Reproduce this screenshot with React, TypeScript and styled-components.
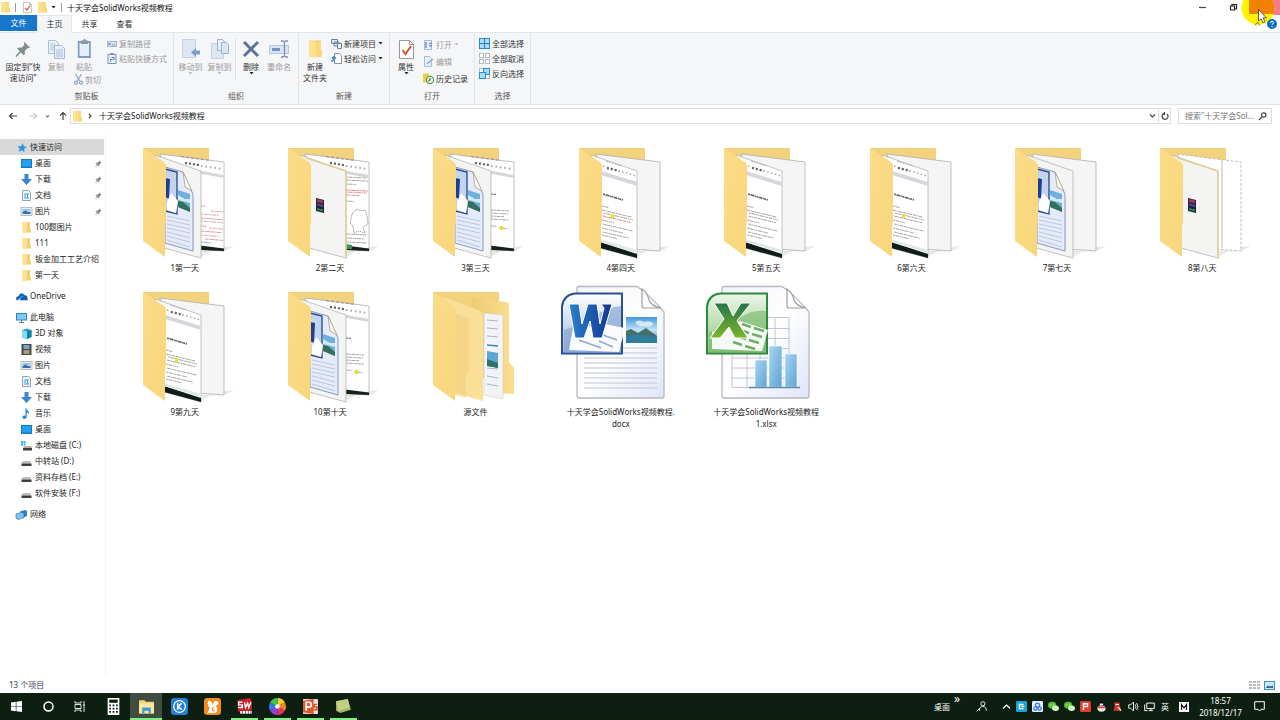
import React from "react";
import styled, { createGlobalStyle } from "styled-components";

const Global = createGlobalStyle`
  * { box-sizing: border-box; }
  html, body { margin: 0; padding: 0; }
  body, button, input {
    font-family: "Noto Sans", "Noto Sans CJK SC", sans-serif;
    font-size: 8px;
    line-height: 12px;
    color: #222;
  }
  button { background: none; border: 0; padding: 0; margin: 0; }
  a { color: inherit; text-decoration: none; }
  ul { list-style: none; margin: 0; padding: 0; }
  svg { display: block; flex: none; overflow: visible; }
`;

const Window = styled.div`
  min-height: 100vh;
  display: flex;
  flex-direction: column;
  background: #fff;
`;

/* ---------- title bar ---------- */

const TitleBar = styled.header`
  height: 15px;
  display: flex;
  align-items: center;
  padding-left: 1px;
`;
const QuickButton = styled.button<{ $w?: number }>`
  width: ${(p) => p.$w ?? 10}px;
  height: 15px;
  display: flex;
  align-items: center;
  justify-content: center;
`;
const Bar = styled.span`
  width: 1px;
  height: 9px;
  margin: 0 5px;
  background: #9a9a9a;
`;
const Title = styled.h1`
  margin: 0;
  flex: 1;
  font-size: 8px;
  font-weight: 400;
  color: #111;
`;
const WindowButton = styled.button`
  width: 31px;
  height: 15px;
  display: flex;
  align-items: center;
  justify-content: center;
`;
const CloseButton = styled(WindowButton)`
  position: relative;
  background: #f47c8c;
`;
const Pointer = styled.svg`
  position: absolute;
  top: 0;
  right: 5px;
  z-index: 2;
  pointer-events: none;
`;

/* ---------- tabs ---------- */

const Tabs = styled.nav`
  height: 18px;
  display: flex;
  border-bottom: 1px solid #e4e5e6;
`;
const Tab = styled.button<{ $kind?: "file" | "active" }>`
  width: ${(p) => (p.$kind === "file" ? 37 : 35)}px;
  height: ${(p) => (p.$kind === "file" ? 16 : 18)}px;
  padding-bottom: ${(p) => (p.$kind === "file" ? 0 : 1)}px;
  color: ${(p) => (p.$kind === "file" ? "#fff" : "#333")};
  background: ${(p) => (p.$kind === "file" ? "#1877c9" : p.$kind === "active" ? "#f5f6f8" : "none")};
  border: solid ${(p) => (p.$kind === "active" ? "#e4e5e6" : "transparent")};
  border-width: ${(p) => (p.$kind === "file" ? "0" : "1px 1px 0")};
`;
const TabEnd = styled.div`
  margin-left: auto;
  display: flex;
  align-items: center;
  gap: 6px;
  padding: 0 3px;
  position: relative;
  z-index: 3;
`;

/* ---------- ribbon ---------- */

const Ribbon = styled.section`
  display: flex;
  height: 72px;
  background: #f5f6f8;
  border-bottom: 1px solid #e2e3e4;
`;
const Group = styled.div<{ $w: number }>`
  width: ${(p) => p.$w}px;
  display: flex;
  flex-direction: column;
  border-right: 1px solid #e2e4e6;
`;
const GroupBody = styled.div<{ $pad?: number }>`
  flex: 1;
  display: flex;
  align-items: flex-start;
  padding: 3px 0 0 ${(p) => p.$pad ?? 2}px;
`;
const Caption = styled.div`
  height: 14px;
  line-height: 12px;
  text-align: center;
  color: #555;
`;
const Big = styled.button<{ $w: number; $off?: boolean }>`
  width: ${(p) => p.$w}px;
  display: flex;
  flex-direction: column;
  align-items: center;
  padding-top: 1px;
  line-height: 11px;
  color: ${(p) => (p.$off ? "#9a9a9a" : "#333")};
  white-space: pre-line;
`;
const BigIcon = styled.span`
  height: 24px;
  display: flex;
  align-items: center;
`;
const Stack = styled.div<{ $pad?: number }>`
  display: flex;
  flex-direction: column;
  padding-left: ${(p) => p.$pad ?? 0}px;
`;
const Small = styled.button<{ $off?: boolean; $h?: number; $pad?: number }>`
  height: ${(p) => p.$h ?? 15}px;
  display: flex;
  align-items: center;
  gap: 2px;
  padding-left: ${(p) => p.$pad ?? 0}px;
  white-space: nowrap;
  color: ${(p) => (p.$off ? "#9a9a9a" : "#333")};
`;
const VLine = styled.span`
  width: 1px;
  height: 42px;
  margin: 2px 1px 0;
  background: #e0e2e4;
`;

/* ---------- address ---------- */

const AddressRow = styled.div`
  display: flex;
  align-items: center;
  height: 22px;
  padding-right: 8px;
`;
const NavButton = styled.button<{ $w: number }>`
  width: ${(p) => p.$w}px;
  height: 16px;
  display: flex;
  align-items: center;
  justify-content: center;
`;
const AddressBox = styled.div`
  flex: 1;
  height: 16px;
  display: flex;
  align-items: center;
  gap: 6px;
  padding-left: 2px;
  border: 1px solid #dedede;
`;
const AddressEnd = styled.div`
  display: flex;
  align-self: stretch;
  margin-left: auto;
`;
const AddressButton = styled.button`
  width: 12px;
  display: flex;
  align-items: center;
  justify-content: center;
  & + & { border-left: 1px solid #dedede; }
`;
const SearchBox = styled.label`
  width: 94px;
  height: 16px;
  margin-left: 7px;
  display: flex;
  align-items: center;
  padding: 0 4px 0 6px;
  border: 1px solid #dedede;
`;
const SearchInput = styled.input`
  flex: 1;
  min-width: 0;
  padding: 0;
  border: 0;
  outline: 0;
  background: none;
  &::placeholder { color: #777; opacity: 1; }
`;

/* ---------- body ---------- */

const Body = styled.div`
  flex: 1;
  display: flex;
  padding-top: 7px;
`;
const Sidebar = styled.nav`
  width: 106px;
  flex: none;
  padding-top: 5px;
  border-right: 1px solid #f3f3f3;
`;
const TreeGroup = styled.ul`
  margin-bottom: 5px;
`;
const TreeLink = styled.a<{ $root?: boolean; $selected?: boolean }>`
  height: 16px;
  display: flex;
  align-items: center;
  gap: 3px;
  margin-right: 1px;
  padding: 0 2px 0 ${(p) => (p.$root ? 16 : 21)}px;
  white-space: nowrap;
  background: ${(p) => (p.$selected ? "#d9d9d9" : "none")};
`;
const Grow = styled.span`
  flex: 1;
`;
const Files = styled.main`
  flex: 1;
  display: grid;
  grid-template-columns: repeat(auto-fill, minmax(145px, 1fr));
  grid-auto-rows: minmax(144px, auto);
  align-content: start;
  padding: 0 5px 0 6px;
`;
const FileItem = styled.button`
  display: flex;
  flex-direction: column;
  align-items: center;
  justify-content: flex-start;
  height: 144px;
`;
const FileName = styled.span`
  white-space: pre-line;
  text-align: center;
`;

/* ---------- status + taskbar ---------- */

const StatusBar = styled.footer`
  height: 16px;
  display: flex;
  align-items: center;
  gap: 4px;
  padding: 0 5px 0 9px;
  color: #33425c;
`;
const Taskbar = styled.div`
  height: 27px;
  display: flex;
  background: #0d1f10;
  color: #fff;
`;
const TaskButton = styled.button<{ $active?: boolean; $running?: boolean }>`
  width: ${(p) => (p.$running && !p.$active ? 27 : 32)}px;
  margin: 0 ${(p) => (p.$running && !p.$active ? "3px 0 2px" : "0")};
  height: 27px;
  display: flex;
  align-items: center;
  justify-content: center;
  background: ${(p) => (p.$active ? "#3f4d41" : "none")};
  border: solid ${(p) => (p.$running ? "#82ee84" : "transparent")};
  border-width: 0 0 2px;
  padding-top: 2px;
`;
const Apps = styled.div`
  display: flex;
  gap: 1px;
  padding-left: 1px;
`;
const Tray = styled.div`
  margin-left: auto;
  display: flex;
  align-items: center;
  padding-right: 8px;
`;
const TrayButton = styled.button<{ $w?: number }>`
  width: ${(p) => p.$w ?? 16}px;
  height: 27px;
  display: flex;
  align-items: center;
  justify-content: center;
  color: #fff;
`;
const Chevrons = styled(TrayButton)`
  align-items: flex-start;
  font-size: 12px;
`;
const Clock = styled.button`
  width: 53px;
  color: #fff;
  text-align: center;
`;

/* ---------- small icons ---------- */

const FolderIcon = ({ w = 9, h = 11 }: { w?: number; h?: number }) => (
  <svg width={w} height={h} viewBox="0 0 9 11" preserveAspectRatio="none">
    <path d="M0 .3h8v6.200h1V10.300H0z" fill="#f0c85d" />
    <path d="M0 .3h3.500l1.500 1V10.800L0 10.300z" fill="#fde191" />
    <path d="M5 1h3v5.500h1v3.800H5z" fill="#f9d877" />
  </svg>
);
const Caret = ({ c = "#222" }: { c?: string }) => (
  <svg width="5" height="3" viewBox="0 0 5 3"><path d="M.5 0h4L2.500 2.500z" fill={c} /></svg>
);
const CheckDoc = ({ w = 10, h = 12 }: { w?: number; h?: number }) => (
  <svg width={w} height={h} viewBox="0 0 15 19">
    <path d="M.5.5h10l4 4v14H.5z" fill="#fff" stroke="#989898" />
    <path d="M10.500.5v4h4" fill="none" stroke="#989898" />
    <path d="M3.500 10l3 4 5.500-8" fill="none" stroke="#d35227" strokeWidth="2" />
  </svg>
);
const PinBig = () => (
  <svg width="16" height="16" viewBox="0 0 16 16">
    <path d="M9.500 1l5.500 5.500-1.500.8-.8-.2-3 3 .2 3-1.200 1.200L2.200 7.700l1.200-1.200 3.200.2 2.800-2.900-.5-1z" fill="#7f8c92" />
    <path d="M5.500 10.500L1 15.500" stroke="#7f8c92" strokeWidth="1.500" />
  </svg>
);
const PinSmall = () => (
  <svg width="7" height="7" viewBox="0 0 16 16">
    <path d="M9.500 1l5.500 5.500-2 1-3.300 3.200v3L8.500 15 1.500 7.800 3 6.500h3l3-3z" fill="#85898c" />
    <path d="M5.500 10.500L1 15.500" stroke="#85898c" strokeWidth="2" />
  </svg>
);
const CopyBig = () => (
  <svg width="17" height="19" viewBox="0 0 17 19">
    <path d="M.5.5h7l3 3v10H.5z" fill="#e9f0f9" stroke="#aebfd6" />
    <path d="M2 4h5M2 6h5M2 8h5M2 10h4" stroke="#b9c9e0" />
    <path d="M6.500 5.500h7l3 3v10h-10z" fill="#e9f0f9" stroke="#a6b9d3" />
    <path d="M8 10h7M8 12h7M8 14h7M8 16h7" stroke="#a9bedb" />
  </svg>
);
const PasteBig = () => (
  <svg width="15" height="20" viewBox="0 0 15 20">
    <rect x=".8" y="2" width="13" height="17" fill="#7e9cc4" />
    <rect x="2.500" y="4" width="9.600" height="13" fill="#e6eefa" />
    <path d="M4 1.500h2a1.500 1.500 0 013 0h2V5H4z" fill="#8b96a6" />
  </svg>
);
const Scissors = () => (
  <svg width="9" height="11" viewBox="0 0 9 11" fill="none" stroke="#90a5c6" strokeWidth="1.300">
    <path d="M1.500 0l4.300 7M7.500 0L3.200 7" /><circle cx="2" cy="8.700" r="1.500" /><circle cx="7" cy="8.700" r="1.500" />
  </svg>
);
const PathIcon = () => (
  <svg width="10" height="6" viewBox="0 0 10 6">
    <rect x=".5" y=".5" width="9" height="5" fill="#d2dff0" stroke="#a3b7d3" />
    <path d="M1.500 2l1 2 1-2M5 4h1M7 4h1" stroke="#5d7ba8" fill="none" />
  </svg>
);
const ShortcutPaste = () => (
  <svg width="10" height="11" viewBox="0 0 10 11">
    <rect x="1" y="1.500" width="8" height="9" fill="#e9f0fa" stroke="#7b97c0" />
    <rect x="3" y="0" width="4" height="2" fill="#8994a5" />
    <path d="M3.500 8.500V6.500h2M4.500 4.500H7V7" fill="none" stroke="#53709e" />
  </svg>
);
const MoveTo = () => (
  <svg width="18" height="20" viewBox="0 0 18 20">
    <path d="M.5.500h13v18H.5z" fill="#dde7f4" stroke="#c3d1e4" />
    <path d="M9 13.500l5-4.500v2.500h4v4h-4V18z" fill="#809ecb" />
  </svg>
);
const CopyTo = () => (
  <svg width="18" height="20" viewBox="0 0 18 20">
    <path d="M.5 4.500h12v15H.5z" fill="#dde7f4" stroke="#c3d1e4" />
    <path d="M6.500.500h5l2 2v9h-7z" fill="#e9f0f9" stroke="#9db2d0" />
    <path d="M10.500 3.500h5l2 2v9h-7z" fill="#dbe6f5" stroke="#9db2d0" />
  </svg>
);
const DeleteIcon = () => (
  <svg width="18" height="18" viewBox="0 0 18 18"><path d="M2 2l14 14M16 2L2 16" stroke="#5a7292" strokeWidth="3" /></svg>
);
const RenameIcon = () => (
  <svg width="20" height="18" viewBox="0 0 20 18">
    <rect x=".5" y="5.500" width="19" height="8" fill="#d9e5f5" stroke="#b6c8e0" />
    <rect x="3" y="8" width="8" height="3" fill="#7493c2" />
    <path d="M12 1h2l1.500 1L17 1h2M15.500 2v14M12 17h2l1.500-1 1.500 1h2" fill="none" stroke="#7f90a8" strokeWidth="1.300" />
  </svg>
);
const NewItem = () => (
  <svg width="11" height="10" viewBox="0 0 11 10">
    <path d="M.5.500h6v4h-6zM3 3h5v4H3z" fill="#e3edf7" stroke="#67829f" />
    <path d="M6.500 4.500h4v5h-4z" fill="#fff" stroke="#67829f" />
  </svg>
);
const EasyAccess = () => (
  <svg width="11" height="11" viewBox="0 0 11 11">
    <path d="M3.500.5h5l2 2v8h-7z" fill="#fff" stroke="#7e95ac" />
    <path d="M0 8c2 0 3-1 3-3M1 5.500L3 3.500l2 2" fill="none" stroke="#287ec2" strokeWidth="1.200" />
  </svg>
);
const OpenIcon = () => (
  <svg width="11" height="10" viewBox="0 0 11 10">
    <rect x="1.500" y=".5" width="7" height="9" fill="#e7effa" stroke="#a9bddb" />
    <path d="M3 2v6M6 3.500h3M6 6h3" stroke="#7192c5" strokeWidth="1.500" />
  </svg>
);
const EditIcon = () => (
  <svg width="11" height="11" viewBox="0 0 11 11">
    <path d="M1.500.5h5l2 2v8h-7z" fill="#e7effa" stroke="#a9bddb" />
    <path d="M4 8l6-5" stroke="#8ea9d1" strokeWidth="1.500" />
  </svg>
);
const HistoryIcon = () => (
  <svg width="11" height="11" viewBox="0 0 11 11">
    <path d="M0 .5h6v9H0z" fill="#f0cf48" />
    <circle cx="7" cy="7" r="3.700" fill="#e6f4e6" stroke="#39903e" />
    <path d="M7 5v2l-2 1" fill="none" stroke="#276a31" />
  </svg>
);
const Squares = ({ kind }: { kind: "all" | "none" | "invert" }) => {
  const on = { fill: "#a9dcf9", stroke: "#2d8ccb" };
  const off = { fill: "#fff", stroke: "#b4b9bf" };
  const s = (i: number) => (kind === "invert" && (i === 1 || i === 2) ? on : off);
  return (
    <svg width="11" height="11" viewBox="0 0 11 11">
      {kind === "all" ? (
        <>
          <rect x=".5" y=".5" width="10" height="10" {...on} />
          <path d="M5.500 0v11M0 5.500h11" stroke="#2079bd" />
        </>
      ) : (
        [0, 3, 1, 2].map((i) =>
          kind === "invert" && (i === 1 || i === 2) ? (
            <rect key={i} x={i === 1 ? 4.5 : 0.5} y={i === 1 ? 0.5 : 4.5} width="6" height="6" {...s(i)} />
          ) : (
            <rect key={i} x={(i % 2) * 6 + 0.5} y={i > 1 ? 6.5 : 0.5} width="4" height="4" {...s(i)} />
          )
        )
      )}
    </svg>
  );
};
const Arrow = ({ d, c = "#444", w = 10, h = 10 }: { d: string; c?: string; w?: number; h?: number }) => (
  <svg width={w} height={h} viewBox={`0 0 ${w} ${h}`} fill="none" stroke={c} strokeWidth="1.200"><path d={d} /></svg>
);

/* ---------- tree icons ---------- */

const treeIcons: Record<string, React.ReactNode> = {
  star: <path d="M7 1l.7 3.200L11 5 8.200 6.600l.3 3.600-2.500-2-3.300 1.600 1-3.400L1.500 4l3.400.2z" fill="#3093dc" />,
  desktop: <><rect x="0" y="1" width="11" height="9" fill="#1478c8" /><rect x="1" y="2" width="9" height="6.500" fill="#24a0ee" /></>,
  down: <path d="M3.500 0h4v5H11L5.500 11 0 5h3.500z" fill="#3b86d3" />,
  doc: <><path d="M1.500.5h6l2 2v8h-8z" fill="#eef5fb" stroke="#8aa5b8" /><path d="M3 4h5M3 6h2M3 8h5M6.500 4v4" stroke="#4b9cd2" /></>,
  pic: <><rect x="0" y="1.500" width="11" height="8" fill="#e6edf2" stroke="#a4b1bb" strokeWidth=".8" /><path d="M1.500 3h8v2.500h-8z" fill="#98c8ec" /><path d="M1.500 8V6l3-1.500L7 6h2.500v2z" fill="#3d6f9e" /></>,
  folder: <><path d="M1.500.3h7.500v7h1V10.500H1.500z" fill="#f3cf6e" /><path d="M1.500.3l4.500.7v10l-4.500-.5z" fill="#fde39a" /></>,
  cloud: <path d="M1 9.500C-1 8 0 5 2.500 5 3 2 7 1 8.500 4c2.500 0 3.500 1.500 3 3 1 1 .5 2.500-.5 2.500H4C3.500 7 5 5.500 7 5.500" fill="#0f62b5" stroke="#fff" strokeWidth=".4" />,
  pc: <><rect x="0" y="1" width="11" height="7.500" fill="#2a86c8" /><rect x="1" y="2" width="9" height="5.500" fill="#7cc9f4" /><path d="M3 10.500h5M5.500 8v2" stroke="#6d8595" /></>,
  cube: <><path d="M1 2l5-1.500L10.500 2v7L6 11 1 9.500z" fill="#25a5c9" /><path d="M1 2l5 1.500V11L1 9.500z" fill="#7fe0f0" /><path d="M6 3.500L10.500 2v7L6 11z" fill="#1681a8" /></>,
  video: <><rect x=".5" y="0" width="10" height="11" fill="#3e4a56" /><rect x="2.500" y="1" width="6" height="4" fill="#7fa5c4" /><rect x="2.500" y="6" width="6" height="4" fill="#b0976a" /></>,
  music: <path d="M5 0c.5 2.500 4 3 3 6.500C7.700 5 6.500 4.500 5.700 4.500V9C5 11.500 1.500 11.500 1.500 9.300 1.500 7.500 3.500 7 4.500 7.700V0z" fill="#1e8bd6" />,
  sysdisk: <><path d="M0 1h2v2H0zM2.500 1h2v2h-2zM0 3.500h2v2H0zM2.500 3.500h2v2h-2z" fill="#26b3e6" /><path d="M3 6h7l1 2H2z" fill="#b3b3b3" /><rect x="2" y="8" width="9" height="2.500" fill="#3b3f42" /></>,
  disk: <><path d="M2 5h7l1.500 2.500H.5z" fill="#bcbcbc" /><rect x=".5" y="7.500" width="10" height="2.500" fill="#3b3f42" /></>,
  net: <><path d="M4 2.500L9 1l2 1v5L6 9z" fill="#2f7fc2" /><path d="M0 5l5.500-1.500L8 4.500v4L2.500 10.500 0 9z" fill="#7fc1f0" stroke="#2e78b8" strokeWidth=".7" /></>,
};
const TreeIcon = ({ name }: { name: string }) => (
  <svg width="11" height="11" viewBox="0 0 11 11">{treeIcons[name]}</svg>
);

/* ---------- large file icons ---------- */

type Line = [number, number, number, string?];

/* Rows of tiny page text; each entry is x1, x2, y and an optional colour. */
const Scribble = ({ lines, slope }: { lines: Line[]; slope: number }) => (
  <>
    {lines.map(([x1, x2, y, c], i) => (
      <path key={i} d={`M${x1} ${y}L${x2} ${y + (x2 - x1) * slope}`} stroke={c ?? "#999"} strokeWidth=".9"
        strokeDasharray={i % 2 ? "3 .6 1.500 .5 4 .7" : "2 .5 4 .8 1 .4"} />
    ))}
  </>
);

type Front = "word" | "rar" | "doc";
type Back = "red" | "mixed" | "doc" | "blank" | "dashed";

const BackPage = ({ kind }: { kind: Back }) => (
  <>
    <path d="M80 118l24-1 9-5-10 1z" fill="#000" opacity=".09" />
    <path d="M39 20L103 28V117L76 115z" fill={kind === "blank" ? "#f5f5f5" : "#fff"} stroke="#b0b0b0" strokeWidth=".8"
      strokeDasharray={kind === "dashed" ? "3 1.500" : undefined} />
    {kind === "dashed" && <path d="M84 26v88" stroke="#aaa" strokeWidth=".8" />}
    {(kind === "red" || kind === "doc" || kind === "mixed") && (
      <>
        <path d="M60 22.500l30 4" stroke="#999" strokeWidth="1.200" strokeDasharray="3 2" />
        <path d="M64 29l14 2" stroke="#555" strokeWidth="2" strokeDasharray="2 2" />
        <path d="M80 32l22 3" stroke="#a5a5a5" strokeWidth="2" strokeDasharray="1.500 3" />
        <path d="M70 35l33 6v3l-33-6z" fill="#d3d6da" />
        <path d="M79 111.500l24 3v2.500l-24-1z" fill="#14221a" />
      </>
    )}
    {kind === "red" && <Scribble slope={0.08} lines={[[80,84,72],[90,102,77,"#d99"],[80,98,80,"#daa0a0"],[80,102,84,"#d88"],[80,102,87,"#daa0a0"],[80,86,92,"#d88"],[88,102,94,"#d99"],[80,101,97,"#d88"],[80,98,101,"#daa0a0"],[84,102,105,"#d88"],[80,90,108]]} />}
    {kind === "doc" && <Scribble slope={0.06} lines={[[80,85,60,"#444"],[80,98,76],[80,97,79],[80,93,82],[80,98,85],[80,86,92],[88,97,94,"#a98"]]} />}
    {kind === "doc" && <rect x="89" y="92" width="3" height="4" fill="#e8e02a" />}
    {kind === "mixed" && (
      <>
        <Scribble slope={0.05} lines={[[80,101,43],[80,102,46],[80,90,50],[80,102,56,"#d77"],[80,101,58,"#d88"],[80,94,61,"#d88"],[80,88,67],[80,100,100],[80,98,104],[80,101,108]]} />
        <path d="M86 80l5-5 4 2 4-1 2 6 1 8-5 3 2 6-6-2-5 2-1-7-3-3z" fill="none" stroke="#888" strokeWidth=".8" strokeDasharray="1.500 .7" />
        <path d="M80 110l6 1v4h-6z" fill="#3f8d57" />
      </>
    )}
  </>
);

const FrontPage = ({ kind, mark }: { kind: Front; mark?: string }) => (
  <>
    <path d="M80 123l9-5-9-2z" fill="#000" opacity=".08" />
    <path d="M34 21L80 37V124L43 114z" fill={kind === "doc" ? "#fff" : "#f4f4f3"} stroke="#b4b4b4" strokeWidth=".8" />
    {kind === "rar" && (
      <>
        <path d="M40 24l40 13v87" fill="none" stroke="#e2cf93" strokeWidth="1.500" />
        <path d="M50 64l8 2v13l-8-2z" fill="#22243c" />
        <path d="M51 65l6 1.500v3l-6-1.500z" fill="#a83556" />
        <path d="M51 69.500l6 1.500v2l-6-1.500z" fill="#4d4aa8" />
        <path d="M51 74l6 1.500v2l-6-1.500z" fill="#2b8a48" />
      </>
    )}
    {kind === "word" && (
      <>
        <path d="M44 33l18 5 8 18 2 4v57l-28-8z" fill="#e6ebfb" stroke="#6d83a9" strokeWidth=".8" />
        <path d="M62 38l2 15 7 4z" fill="#fbfaf4" stroke="#a69f86" strokeWidth=".8" />
        <path d="M44 35l12 3v42l-12-3z" fill="#c3d4ec" stroke="#26468f" strokeWidth="1.300" />
        <path d="M44 44l5 1-1 20-4-2z" fill="#1c3f95" />
        <path d="M46 68l4-9 7 8-2 12-9-3z" fill="#fff" />
        <path d="M57 56l12 4v18l-12-5z" fill="#6fb0dd" />
        <path d="M57 61l7 4 5 0v4l-12-3z" fill="#d2e9f4" />
        <path d="M57 67l5 1 7 6v4l-12-5z" fill="#33705c" />
        <path d="M46 82l23 5M46 86l23 5M46 90l23 5M46 94l23 5M46 98l23 6M46 102l23 6M46 106l23 7" stroke="#aebad6" strokeWidth=".8" />
      </>
    )}
    {kind === "doc" && (
      <>
        <path d="M49 27l16 5" stroke="#aaa" strokeWidth="1" strokeDasharray="2 .8" />
        <path d="M46 32l33 10" stroke="#aaa" strokeWidth="1.500" strokeDasharray="1.500 2.500" />
        <path d="M50 34l12 3" stroke="#666" strokeWidth="2.300" strokeDasharray="2 2" />
        <path d="M44 37l36 11v4L44 41z" fill="#d5d7dc" />
        <path d="M46 60l20 6" stroke="#666" strokeWidth="1.700" strokeDasharray="2 .6 4 .5 1 .4" />
        <Scribble slope={0.24} lines={[[45,52,72],[45,75,76],[47,76,79],[46,74,82,mark === "red" ? "#d98572" : undefined],[45,57,86],[46,76,90],[45,66,94],[46,72,98],[45,60,101]]} />
        {mark && <rect x="54" y="80" width="3" height="4" fill="#eadf20" />}
        <path d="M43 108l37 12v4l-37-10z" fill="#101c18" />
        <path d="M43 105l37 11v3l-37-11z" fill="#dcebea" />
      </>
    )}
  </>
);

const BigFolder = ({ front, back, mark }: { front?: Front; back?: Back; mark?: string }) => (
  <svg width="128" height="128" viewBox="0 0 128 128">
    <defs>
      <linearGradient id="flap" x1="0" y1="0" x2="1" y2="1">
        <stop offset="0" stopColor="#fbdc87" /><stop offset="1" stopColor="#f8d67c" />
      </linearGradient>
      <linearGradient id="inner" x1="0" y1="0" x2="1" y2="0">
        <stop offset="0" stopColor="#eccb74" /><stop offset="1" stopColor="#fbdf8e" />
      </linearGradient>
    </defs>
    <path d="M22 14H87q1 0 1 1V100H30z" fill="#f3d27e" />
    {front && back ? (
      <>
        <BackPage kind={back} />
        <FrontPage kind={front} mark={mark} />
      </>
    ) : (
      <>
        <path d="M60 20l36 4q2 0 2 2v58l5 6v26l-27-1z" fill="url(#inner)" />
        <path d="M73 35l19 2v84l-19-4z" fill="#f2f3f5" stroke="#ccc" strokeWidth=".6" />
        <path d="M76 42l11 1M76 50l11 1M76 58l11 1M76 90l11 1M76 98l11 2M76 106l11 2" stroke="#9fb8cc" />
        <path d="M76 67l11 1" stroke="#318bb5" strokeWidth="1.500" />
        <path d="M76 73l11 2v15l-11-2z" fill="#5aa8d6" /><path d="M76 81l11 4v5l-11-2z" fill="#2f7468" />
        <path d="M33 19l36 14q3 1 3 4v86l-28-8z" fill="#f9df97" />
        <path d="M44 36l14 4v52l-3 6v22l-11-3z" fill="#f1d081" opacity=".6" />
      </>
    )}
    <path d="M22 14L43 28q2 2 2 4V86l-1 8v29L22 107z" fill="url(#flap)" />
  </svg>
);

const WordFile = () => (
  <svg width="128" height="128" viewBox="0 0 128 128">
    <defs>
      <linearGradient id="sheet" x1="0" y1="0" x2="1" y2="1"><stop offset="0" stopColor="#f3f3fa" /><stop offset=".5" stopColor="#fff" /><stop offset="1" stopColor="#dfe5f9" /></linearGradient>
      <linearGradient id="wbox" x1="0" y1="0" x2="0" y2="1"><stop offset="0" stopColor="#fff" /><stop offset="1" stopColor="#9ab6dc" /></linearGradient>
      <linearGradient id="w" x1="0" y1="0" x2="1" y2="0"><stop offset="0" stopColor="#2a80cc" /><stop offset="1" stopColor="#12368f" /></linearGradient>
      <linearGradient id="sky" x1="0" y1="0" x2="0" y2="1"><stop offset="0" stopColor="#3f97de" /><stop offset=".5" stopColor="#c5e3f6" /><stop offset="1" stopColor="#2b80a8" /></linearGradient>
    </defs>
    <path d="M22 8.500H80Q92 16 107 34V118q0 2-2 2H22q-2 0-2-2V10q0-1.500 2-1.500z" fill="url(#sheet)" stroke="#b5b8bf" strokeWidth="1.300" />
    <path d="M85 11v17q0 2 2 2h17Q94 28 92 22 90 14 85 11z" fill="#fdfdfd" stroke="#9a9da4" strokeWidth="1.200" />
    <path d="M27 70h73M27 75h73M27 80h73M27 85h73M27 90h73M27 95h73M27 100h73M27 105h73M27 110h73" stroke="#bfc5d4" strokeWidth="1" />
    <rect x="69" y="39" width="31" height="26" fill="url(#sky)" />
    <path d="M78 44q5-3 9 0 6-2 10 2-5 4-10 2-6 1-9-4z" fill="#e8f4fb" opacity=".8" />
    <path d="M69 53l5-2 7 4 8-5 4 3 7 5v2H69z" fill="#456f6a" />
    <path d="M69 58q14-3 31 1v6H69z" fill="#2f7f9c" />
    <path d="M18 15.500H65V75.500H5V29Q6 17 18 15.500z" fill="url(#wbox)" stroke="#2a4f97" strokeWidth="2" />
    <path d="M7 52q20-6 30-14 14-9 27-10v47H7z" fill="#7e9fd0" opacity=".6" />
    <path d="M16 50l32-4 20 4-6 24-50-2z" fill="#fff" opacity=".95" />
    <path d="M22 62l22 8M46 57l14 5M42 63l14 6" stroke="#93a8d0" strokeWidth="1.500" />
    <path d="M12 26h10l3 20 6-20h9l3 20 4-16-3-4h11L45 60h-9l-3-17-6 17h-9z" fill="url(#w)" stroke="#fff" strokeWidth="1" />
  </svg>
);

const ExcelFile = () => (
  <svg width="128" height="128" viewBox="0 0 128 128">
    <defs>
      <linearGradient id="xbox" x1="0" y1="0" x2="0" y2="1"><stop offset="0" stopColor="#edf6e6" /><stop offset="1" stopColor="#8cc47f" /></linearGradient>
      <linearGradient id="bar" x1="0" y1="0" x2="1" y2="1"><stop offset="0" stopColor="#a9d4f0" /><stop offset="1" stopColor="#5ca4d2" /></linearGradient>
      <linearGradient id="x" x1="0" y1="0" x2="0" y2="1"><stop offset="0" stopColor="#25744a" /><stop offset="1" stopColor="#7cb629" /></linearGradient>
    </defs>
    <path d="M22 8.500H80Q92 16 107 34V118q0 2-2 2H22q-2 0-2-2V10q0-1.500 2-1.500z" fill="url(#sheet)" stroke="#b5b8bf" strokeWidth="1.300" />
    <path d="M85 11v17q0 2 2 2h17Q94 28 92 22 90 14 85 11z" fill="#fdfdfd" stroke="#9a9da4" strokeWidth="1.200" />
    <path d="M30 39.500h57v70H30zM45 40v70M58 40v70M73 40v70M30 50.500h57M30 60.500h57M30 70.500h57M30 80h57M30 90h57M30 100h57" fill="none" stroke="#b9bfce" strokeWidth=".9" />
    <rect x="53" y="82" width="12" height="27" fill="url(#bar)" stroke="#fff" strokeWidth=".6" />
    <rect x="67" y="68" width="13" height="41" fill="url(#bar)" stroke="#fff" strokeWidth=".6" />
    <rect x="83" y="76" width="12" height="33" fill="url(#bar)" stroke="#fff" strokeWidth=".6" />
    <path d="M47 109.500h51" stroke="#5d89ad" strokeWidth="1.500" />
    <path d="M18 15.500H65V75.500H5V29Q6 17 18 15.500z" fill="url(#xbox)" stroke="#2a8a3d" strokeWidth="2" />
    <path d="M7 54q22-6 30-14 14-9 27-7v42H7z" fill="#74b86a" opacity=".6" />
    <path d="M10 54l28-11 28 9-6 21-50-2z" fill="#fff" opacity=".92" />
    <path d="M40 46l9 3M52 50l10 3M38 52l9 3M50 56l10 3M35 58l9 3M47 62l10 3M31 64l9 3M43 68l10 3" stroke="#6fae68" strokeWidth="2.500" />
    <path d="M12 25h13l6 13 8-13h10L35 43l11 17H33l-6-11-9 11H8l14-19z" fill="url(#x)" stroke="#fff" strokeWidth="1" />
  </svg>
);

/* ---------- taskbar icons ---------- */

const Box = ({ size = 17, children }: { size?: number; children: React.ReactNode }) => (
  <svg width={size} height={size} viewBox="0 0 16 16">{children}</svg>
);
const apps: { name: string; running?: boolean; active?: boolean; icon: React.ReactNode }[] = [
  { name: "计算器", icon: <Box><path d="M2.500 0h11v16h-11z" fill="#fff" /><path d="M4 1.500h8v3H4z" fill="#0d1f10" /><path d="M4 7h8M4 10h8M4 13h8" stroke="#0d1f10" strokeWidth="1.600" strokeDasharray="1.600 1.600" /></Box> },
  { name: "文件资源管理器", running: true, active: true, icon: <Box><path d="M1 2h5l1.500 1.500H15v11H1z" fill="#f3d37a" /><path d="M1 5h14v9.500H1z" fill="#fde6a0" /><path d="M4 9h8v5.500h-2V12H6v2.500H4z" fill="#3b9bd4" /></Box> },
  { name: "酷狗", icon: <Box><rect width="16" height="16" rx="3" fill="#247fdc" /><circle cx="8" cy="8" r="5.500" fill="none" stroke="#fff" strokeWidth="1.200" /><path d="M6.300 5v6M10 5L6.800 8 10 11" fill="none" stroke="#fff" strokeWidth="1.500" /></Box> },
  { name: "UC浏览器", icon: <Box><rect width="16" height="16" rx="3" fill="#f58d1e" /><path d="M3.500 4C4 2 6.500 2 7.500 4.500l.5 2C9 3 11 2 13 3.500c1.500 2-.5 3.500-2.500 4C13 8 13.500 13.500 10 14H3c1.500-1 1-2.500 2.500-4.500C4.500 8 3 7 3.500 4z" fill="#fff" /><path d="M9.500 9c-2 0-2.500 3.500.5 3" fill="none" stroke="#f58d1e" strokeWidth="1.200" /></Box> },
  { name: "SolidWorks", running: true, icon: <Box><path d="M1 2l12-2 2 3v9l-13 1z" fill="#c9202b" /><path d="M6 4H2.500v2.500H6V9H2M8 4l1 5 2-4 1 4 2-5" fill="none" stroke="#fff" strokeWidth="1.300" /><path d="M4 13.500h11" stroke="#fff" strokeWidth="2.500" strokeDasharray="2 .6" /></Box> },
  { name: "色轮", running: true, icon: <Box><path d="M8 8V0a8 8 0 016.900 4z" fill="#f7d02c" /><path d="M8 8l6.900-4a8 8 0 010 8z" fill="#f48324" /><path d="M8 8l6.900 4A8 8 0 018 16z" fill="#e53461" /><path d="M8 8v8a8 8 0 01-6.900-4z" fill="#9a43d3" /><path d="M8 8l-6.900 4a8 8 0 010-8z" fill="#3678ea" /><path d="M8 8L1.100 4A8 8 0 018 0z" fill="#43c54b" /><circle cx="8" cy="8" r="2.200" fill="#fff" /></Box> },
  { name: "PowerPoint", running: true, icon: <Box><path d="M1 1h14v14H1z" fill="#f4e4dc" /><path d="M1 2.500L11 1v14L1 13.500z" fill="#e2562a" /><path d="M4 12V4h2.500a2.200 2.200 0 010 4.500H4" fill="none" stroke="#fff" strokeWidth="1.600" /><path d="M14 6h-2.500v2.500H14V11h-3" fill="none" stroke="#d84a20" strokeWidth="1.300" /></Box> },
  { name: "便笺", running: true, icon: <Box><path d="M1 3l11-2 3 10-10 3-4-2z" fill="#a5b568" /><path d="M1 3l11-2 2 8-11 3z" fill="#c2d084" /></Box> },
];

const Chat = () => (
  <Box size={11}><ellipse cx="6" cy="6" rx="6" ry="5" fill="#58c336" /><ellipse cx="11" cy="10.500" rx="5" ry="4" fill="#d4f3c3" /><path d="M4 5v1M8 5v1" stroke="#fff" strokeWidth="1.500" /></Box>
);
const tray: { name: string; icon: React.ReactNode }[] = [
  { name: "安全卫士", icon: <Box size={11}><rect width="16" height="16" rx="2" fill="#1ba4d8" /><path d="M11 5H5v6h6M8 8h4" fill="none" stroke="#fff" strokeWidth="2" /></Box> },
  { name: "网盘", icon: <Box size={11}><rect width="16" height="16" rx="2" fill="#e8f1fd" /><circle cx="8" cy="6" r="3" fill="none" stroke="#3f7ce8" strokeWidth="2" /><circle cx="5" cy="11" r="2.500" fill="none" stroke="#3f7ce8" strokeWidth="2" /><circle cx="11" cy="11" r="2.500" fill="none" stroke="#3f7ce8" strokeWidth="2" /></Box> },
  { name: "微信", icon: <Chat /> },
  { name: "微信 2", icon: <Chat /> },
  { name: "提醒", icon: <Box size={11}><rect width="16" height="16" rx="2" fill="#e33d30" /><path d="M5 3v10M5 4h6v4H5" fill="none" stroke="#fff" strokeWidth="2" /></Box> },
  { name: "QQ", icon: <Box size={11}><ellipse cx="8" cy="6" rx="4.500" ry="6" fill="#111" /><ellipse cx="8" cy="11" rx="6" ry="4.500" fill="#e9e9e9" /><path d="M3 8h10v2.500H3z" fill="#e33d30" /><path d="M5.500 5h5" stroke="#fff" strokeWidth="2.500" /></Box> },
  { name: "助手", icon: <Box size={11}><path d="M3 2h8v4l3 8H2l2-6z" fill="#d9372c" /><path d="M5 5h5M9 9l4 5" stroke="#fff" strokeWidth="1.500" /></Box> },
  { name: "音量", icon: <Box size={11}><path d="M1 5.500h3l4-4v13l-4-4H1zM10.500 5q2 3 0 6M12.500 3q4 5 0 10" fill="none" stroke="#fff" strokeWidth="1.300" /></Box> },
  { name: "网络", icon: <Box size={11}><path d="M4 3h11v8H4zM7 14h6M10 11v3M1 5v9h4" fill="none" stroke="#fff" strokeWidth="1.400" /></Box> },
];

/* ---------- data ---------- */

type Entry = { name: string; icon: React.ReactNode };
const files: Entry[] = [
  { name: "1第一天", icon: <BigFolder front="word" back="red" /> },
  { name: "2第二天", icon: <BigFolder front="rar" back="mixed" /> },
  { name: "3第三天", icon: <BigFolder front="word" back="doc" /> },
  { name: "4第四天", icon: <BigFolder front="doc" back="blank" mark="red" /> },
  { name: "5第五天", icon: <BigFolder front="doc" back="blank" /> },
  { name: "6第六天", icon: <BigFolder front="doc" back="blank" mark="yellow" /> },
  { name: "7第七天", icon: <BigFolder front="word" back="blank" /> },
  { name: "8第八天", icon: <BigFolder front="rar" back="dashed" /> },
  { name: "9第九天", icon: <BigFolder front="doc" back="blank" mark="yellow" /> },
  { name: "10第十天", icon: <BigFolder front="word" back="doc" /> },
  { name: "源文件", icon: <BigFolder /> },
  { name: "十天学会SolidWorks视频教程.\ndocx", icon: <WordFile /> },
  { name: "十天学会SolidWorks视频教程\n1.xlsx", icon: <ExcelFile /> },
];

type Node = { t: string; i: string; pin?: boolean };
const tree: Node[][] = [
  [
    { t: "快速访问", i: "star" }, { t: "桌面", i: "desktop", pin: true }, { t: "下载", i: "down", pin: true },
    { t: "文档", i: "doc", pin: true }, { t: "图片", i: "pic", pin: true }, { t: "100题图片", i: "folder" },
    { t: "111", i: "folder" }, { t: "钣金加工工艺介绍", i: "folder" }, { t: "第一天", i: "folder" },
  ],
  [{ t: "OneDrive", i: "cloud" }],
  [
    { t: "此电脑", i: "pc" }, { t: "3D 对象", i: "cube" }, { t: "视频", i: "video" }, { t: "图片", i: "pic" },
    { t: "文档", i: "doc" }, { t: "下载", i: "down" }, { t: "音乐", i: "music" }, { t: "桌面", i: "desktop" },
    { t: "本地磁盘 (C:)", i: "sysdisk" }, { t: "中转站 (D:)", i: "disk" }, { t: "资料存档 (E:)", i: "disk" },
    { t: "软件安装 (F:)", i: "disk" },
  ],
  [{ t: "网络", i: "net" }],
];

const BigButton = ({ w, off, icon, children, menu }: { w: number; off?: boolean; icon: React.ReactNode; children: React.ReactNode; menu?: boolean }) => (
  <Big $w={w} $off={off}>
    <BigIcon>{icon}</BigIcon>
    <span>{children}</span>
    {menu && <Caret c={off ? "#bbb" : "#222"} />}
  </Big>
);

export default function App() {
  return (
    <Window>
      <Global />
      <TitleBar>
        <FolderIcon />
        <Bar />
        <QuickButton $w={12} aria-label="属性"><CheckDoc w={9} h={11} /></QuickButton>
        <QuickButton $w={18} aria-label="新建文件夹"><FolderIcon /></QuickButton>
        <QuickButton $w={5} aria-label="自定义快速访问工具栏"><Caret /></QuickButton>
        <Bar />
        <Title>十天学会SolidWorks视频教程</Title>
        <WindowButton aria-label="最小化"><Arrow d="M1 4.500h7" w={9} h={9} /></WindowButton>
        <WindowButton aria-label="还原"><Arrow d="M1.500 3h4v4h-4zM3 3V1.500h4.500V6H6" w={9} h={9} c="#222" /></WindowButton>
        <CloseButton aria-label="关闭">
          <Pointer width="34" height="26" viewBox="0 0 34 26">
            <clipPath id="top"><rect x="0" y="0" width="34" height="26" /></clipPath>
            <clipPath id="disc"><circle cx="17" cy="8" r="16.500" /></clipPath>
            <circle cx="17" cy="8" r="16.500" fill="#fdf400" clipPath="url(#top)" />
            <rect x="8" y="0" width="30" height="14" fill="#f28100" clipPath="url(#disc)" />
            <path d="M17.500 9.500V21l2.600-2.300 1.800 4 2-.9-1.800-3.900H25.500z" fill="#fff" stroke="#333" strokeWidth=".8" />
          </Pointer>
        </CloseButton>
      </TitleBar>

      <Tabs>
        <Tab $kind="file">文件</Tab>
        <Tab $kind="active">主页</Tab>
        <Tab>共享</Tab>
        <Tab>查看</Tab>
        <TabEnd>
          <Arrow d="M1 4l2.500-2.500L6 4" w={7} h={5} c="#a8981c" />
          <svg width="10" height="10" viewBox="0 0 10 10">
            <circle cx="5" cy="5" r="5" fill="#0c6fc4" />
            <path d="M3.500 4q0-1.700 1.500-1.700T6.500 3.800Q6.500 4.600 5 5.500v.5M5 7v1" fill="none" stroke="#fff" />
          </svg>
        </TabEnd>
      </Tabs>

      <Ribbon>
        <Group $w={174}>
          <GroupBody $pad={4}>
            <BigButton w={38} icon={<PinBig />}>{"固定到“快\n速访问”"}</BigButton>
            <BigButton w={28} off icon={<CopyBig />}>复制</BigButton>
            <Stack>
              <BigButton w={28} off icon={<PasteBig />}>粘贴</BigButton>
              <Small $off $pad={4}><Scissors />剪切</Small>
            </Stack>
            <Stack $pad={6}>
              <Small $off><PathIcon />复制路径</Small>
              <Small $off><ShortcutPaste />粘贴快捷方式</Small>
            </Stack>
          </GroupBody>
          <Caption>剪贴板</Caption>
        </Group>
        <Group $w={125}>
          <GroupBody>
            <BigButton w={29} off menu icon={<MoveTo />}>移动到</BigButton>
            <BigButton w={29} off menu icon={<CopyTo />}>复制到</BigButton>
            <VLine />
            <BigButton w={28} menu icon={<DeleteIcon />}>删除</BigButton>
            <BigButton w={28} off icon={<RenameIcon />}>重命名</BigButton>
          </GroupBody>
          <Caption>组织</Caption>
        </Group>
        <Group $w={91}>
          <GroupBody $pad={0}>
            <BigButton w={32} icon={<FolderIcon w={13} h={18} />}>{"新建\n文件夹"}</BigButton>
            <Stack>
              <Small><NewItem />新建项目 <Caret /></Small>
              <Small><EasyAccess />轻松访问 <Caret /></Small>
            </Stack>
          </GroupBody>
          <Caption>新建</Caption>
        </Group>
        <Group $w={85}>
          <GroupBody $pad={1}>
            <BigButton w={30} menu icon={<CheckDoc w={15} h={19} />}>属性</BigButton>
            <Stack $pad={2}>
              <Small $off $h={17}><OpenIcon />打开 <Caret c="#bbb" /></Small>
              <Small $off $h={17}><EditIcon />编辑</Small>
              <Small $h={17}><HistoryIcon />历史记录</Small>
            </Stack>
          </GroupBody>
          <Caption>打开</Caption>
        </Group>
        <Group $w={56}>
          <GroupBody $pad={4}>
            <Stack>
              <Small><Squares kind="all" />全部选择</Small>
              <Small><Squares kind="none" />全部取消</Small>
              <Small><Squares kind="invert" />反向选择</Small>
            </Stack>
          </GroupBody>
          <Caption>选择</Caption>
        </Group>
      </Ribbon>

      <AddressRow>
        <NavButton $w={25} aria-label="返回"><Arrow d="M9 5H1.500M4.500 2l-3 3 3 3" /></NavButton>
        <NavButton $w={15} aria-label="前进"><Arrow d="M1 5h7.500M5.500 2l3 3-3 3" c="#ccc" /></NavButton>
        <NavButton $w={15} aria-label="最近"><Arrow d="M1 1.500l1.500 1.500L4 1.500" w={5} h={5} c="#777" /></NavButton>
        <NavButton $w={15} aria-label="向上"><Arrow d="M5 9V1.500M2 4.500l3-3 3 3" /></NavButton>
        <AddressBox>
          <FolderIcon />
          <Arrow d="M1 1l2 2-2 2" w={5} h={6} />
          <a href="#folder">十天学会SolidWorks视频教程</a>
          <AddressEnd>
            <AddressButton aria-label="历史"><Arrow d="M1 1.500L3.500 4 6 1.500" w={7} h={6} /></AddressButton>
            <AddressButton aria-label="刷新"><Arrow d="M6 2a3 3 0 11-3-.5M3.500 0v2.500H1" w={8} h={8} /></AddressButton>
          </AddressEnd>
        </AddressBox>
        <SearchBox>
          <SearchInput aria-label="搜索" placeholder={"搜索\"十天学会Sol..."} />
          <Arrow d="M8 3a2.200 2.200 0 11-4.400 0A2.200 2.200 0 018 3zM4 4.800L1 8" w={9} h={9} />
        </SearchBox>
      </AddressRow>

      <Body>
        <Sidebar>
          {tree.map((group, g) => (
            <TreeGroup key={g}>
              {group.map((n, i) => (
                <li key={i}>
                  <TreeLink href="#node" $root={i === 0} $selected={g === 0 && i === 0}>
                    <TreeIcon name={n.i} />
                    {n.t}
                    {n.pin && <><Grow /><PinSmall /></>}
                  </TreeLink>
                </li>
              ))}
            </TreeGroup>
          ))}
        </Sidebar>
        <Files>
          {files.map((f) => (
            <FileItem key={f.name}>
              {f.icon}
              <FileName>{f.name}</FileName>
            </FileItem>
          ))}
        </Files>
      </Body>

      <StatusBar>
        13 个项目
        <Grow />
        <svg width="11" height="8" viewBox="0 0 11 8"><path d="M0 1h3M4 1h3M8 1h3M0 4h3M4 4h3M8 4h3M0 7h3M4 7h3M8 7h3" stroke="#777" /></svg>
        <svg width="11" height="9" viewBox="0 0 11 9"><rect x=".5" y=".5" width="10" height="8" fill="#cfe8f8" stroke="#3c8fc7" /><path d="M2 6.500l2-2 2 1 3-1v2.500H2z" fill="#2c6a95" /></svg>
      </StatusBar>

      <Taskbar>
        <TaskButton aria-label="开始"><svg width="11" height="11" viewBox="0 0 11 11"><path d="M0 1.500l4.800-.7v4.400H0zM5.400.7L11 0v5.200H5.400zM0 5.800h4.800v4.400L0 9.500zM5.400 5.800H11V11l-5.600-.7z" fill="#fff" /></svg></TaskButton>
        <TaskButton aria-label="Cortana"><svg width="11" height="11" viewBox="0 0 11 11"><circle cx="5.500" cy="5.500" r="4.500" fill="none" stroke="#fff" strokeWidth="1.500" /></svg></TaskButton>
        <TaskButton aria-label="任务视图"><svg width="12" height="11" viewBox="0 0 12 11"><path d="M1 0v2h6V0M1 11V9h6v2M1 3.500h6v4H1zM10 0v11M9 4h2" fill="none" stroke="#dfe5df" /></svg></TaskButton>
        <Apps>
          {apps.map((a) => (
            <TaskButton key={a.name} aria-label={a.name} $running={a.running} $active={a.active}>{a.icon}</TaskButton>
          ))}
        </Apps>
        <Tray>
          <TrayButton $w={18}>桌面</TrayButton>
          <Chevrons $w={12}>»</Chevrons>
          <TrayButton $w={36} aria-label="人脉"><Box size={11}><circle cx="10" cy="4" r="3" fill="none" stroke="#fff" strokeWidth="1.300" /><path d="M5 14q0-6 5-6t5 6M1 15l5-5" fill="none" stroke="#fff" strokeWidth="1.300" /></Box></TrayButton>
          <TrayButton $w={14} aria-label="显示隐藏的图标"><Arrow d="M1 5.500L4.500 2 8 5.500" w={9} h={7} c="#fff" /></TrayButton>
          {tray.map((t) => <TrayButton key={t.name} aria-label={t.name}>{t.icon}</TrayButton>)}
          <TrayButton>英</TrayButton>
          <TrayButton $w={21} aria-label="输入法"><svg width="10" height="10" viewBox="0 0 10 10"><rect width="10" height="10" fill="#fff" /><path d="M2.500 8V2.500L5 6l2.500-3.500V8" fill="none" stroke="#111" strokeWidth="1.200" /></svg></TrayButton>
          <Clock>18:57<br />2018/12/17</Clock>
          <TrayButton $w={25} aria-label="通知"><svg width="11" height="11" viewBox="0 0 11 11"><path d="M.7.7h9.600v7.600H7L5.500 10 4 8.300H.7z" fill="none" stroke="#fff" /></svg></TrayButton>
        </Tray>
      </Taskbar>
    </Window>
  );
}
